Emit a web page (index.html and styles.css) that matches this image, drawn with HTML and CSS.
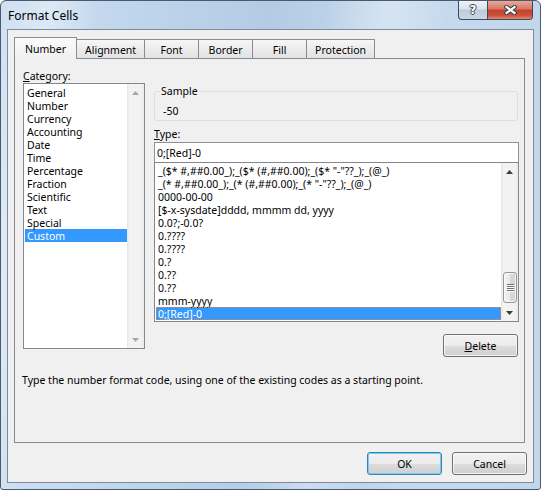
FILE: index.html
```html
<!DOCTYPE html>
<html lang="en">
<head>
<meta charset="utf-8">
<title>Format Cells</title>
<link rel="stylesheet" href="styles.css">
</head>
<body>
<div class="window">
  <div class="titlebar">
    <div class="title">Format Cells</div>
    <div class="caps">
      <div class="cap help"><span class="qmark">?</span></div>
      <div class="cap close">
        <svg width="13" height="10" viewBox="0 0 13 10"><path d="M2.5 2 L10.5 8 M10.5 2 L2.5 8" stroke="#34404c" stroke-width="4.2" stroke-linecap="square" fill="none"/><path d="M2.5 2 L10.5 8 M10.5 2 L2.5 8" stroke="#fff" stroke-width="2.2" stroke-linecap="square" fill="none"/></svg>
      </div>
    </div>
  </div>
  <div class="client">
    <div class="tabs">
      <div class="tab active">Number</div>
      <div class="tab">Alignment</div>
      <div class="tab">Font</div>
      <div class="tab">Border</div>
      <div class="tab">Fill</div>
      <div class="tab">Protection</div>
    </div>
    <div class="panel">
      <div class="panel-grid">
        <div class="col-left">
          <div class="label"><u>C</u>ategory:</div>
          <div class="listbox cat">
            <ul class="items">
              <li>General</li>
              <li>Number</li>
              <li>Currency</li>
              <li>Accounting</li>
              <li>Date</li>
              <li>Time</li>
              <li>Percentage</li>
              <li>Fraction</li>
              <li>Scientific</li>
              <li>Text</li>
              <li>Special</li>
              <li class="sel">Custom</li>
            </ul>
            <div class="vscroll disabled">
              <div class="sb-btn"><svg width="7" height="4" viewBox="0 0 7 4"><path d="M0 4 L3.5 0 L7 4Z" fill="#a7a7a7"/></svg></div>
              <div class="sb-track"></div>
              <div class="sb-btn"><svg width="7" height="4" viewBox="0 0 7 4"><path d="M0 0 L3.5 4 L7 0Z" fill="#a7a7a7"/></svg></div>
            </div>
          </div>
        </div>
        <div class="col-right">
          <fieldset class="sample">
            <legend>Sample</legend>
            <div class="sample-value">-50</div>
          </fieldset>
          <div class="label type-label"><u>T</u>ype:</div>
          <div class="textbox">0;[Red]-0</div>
          <div class="listbox types">
            <ul class="items">
              <li>_($* #,##0.00_);_($* (#,##0.00);_($* "-"??_);_(@_)</li>
              <li>_(* #,##0.00_);_(* (#,##0.00);_(* "-"??_);_(@_)</li>
              <li>0000-00-00</li>
              <li>[$-x-sysdate]dddd, mmmm dd, yyyy</li>
              <li>0.0?;-0.0?</li>
              <li>0.????</li>
              <li>0.????</li>
              <li>0.?</li>
              <li>0.??</li>
              <li>0.??</li>
              <li>mmm-yyyy</li>
              <li class="sel focus">0;[Red]-0</li>
            </ul>
            <div class="vscroll">
              <div class="sb-btn"><svg width="7" height="4" viewBox="0 0 7 4"><path d="M0 4 L3.5 0 L7 4Z" fill="#3c3c3c"/></svg></div>
              <div class="sb-track">
                <div class="thumb">
                  <svg width="7" height="8" viewBox="0 0 7 8"><path d="M0 0.5h7M0 2.5h7M0 4.5h7M0 6.5h7" stroke="#6e6e6e"/><path d="M0 1.5h7M0 3.5h7M0 5.5h7M0 7.5h7" stroke="#fdfdfd"/></svg>
                </div>
              </div>
              <div class="sb-btn"><svg width="7" height="4" viewBox="0 0 7 4"><path d="M0 0 L3.5 4 L7 0Z" fill="#3c3c3c"/></svg></div>
            </div>
          </div>
          <div class="btn-row">
            <button class="btn"><u>D</u>elete</button>
          </div>
        </div>
      </div>
      <p class="hint">Type the number format code, using one of the existing codes as a starting point.</p>
    </div>
    <div class="footer">
      <button class="btn default">OK</button>
      <button class="btn">Cancel</button>
    </div>
  </div>
</div>
</body>
</html>
```
FILE: styles.css
```css
* { box-sizing: border-box; }
html, body { margin: 0; padding: 0; }
body {
  width: 541px;
  height: 490px;
  overflow: hidden;
  background: #ffffff;
  font-family: "Noto Sans", "Open Sans", sans-serif;
  font-size: 10.5px;
  color: #000;
}

.window {
  width: 541px;
  height: 490px;
  border: 1px solid #4b5a6b;
  border-radius: 6px 6px 3px 3px;
  background:
    linear-gradient(100deg, rgba(255,255,255,0) 0%, rgba(255,255,255,0.35) 8%, rgba(255,255,255,0) 16%, rgba(255,255,255,0) 52%, rgba(255,255,255,0.3) 62%, rgba(255,255,255,0) 72%),
    linear-gradient(90deg, #cfe0f2 0%, #bcd3ea 30%, #b3cbe5 50%, #c6daee 75%, #c2d7ec 100%);
  display: flex;
  flex-direction: column;
  overflow: hidden;
}

.titlebar {
  height: 28px;
  flex: none;
  display: flex;
  justify-content: space-between;
  align-items: flex-start;
  padding: 0 7px;
}
.title {
  font-size: 12px;
  line-height: 30px;
  color: #000;
}
.caps { display: flex; }
.cap {
  height: 19px;
  border: 1px solid #3d4a5a;
  border-top: none;
  display: flex;
  align-items: center;
  justify-content: center;
}
.help {
  width: 29px;
  border-right: none;
  border-radius: 0 0 0 4px;
  background: linear-gradient(#eef3f8 0%, #d9e2ec 45%, #bccbdb 50%, #cbd8e5 100%);
}
.qmark {
  font-family: "DejaVu Sans", sans-serif;
  font-weight: bold;
  font-size: 12px;
  line-height: 12px;
  color: #fff;
  text-shadow: 1px 0 0 #3b4754, -1px 0 0 #3b4754, 0 1px 0 #3b4754, 0 -1px 0 #3b4754;
}
.close {
  width: 46px;
  border-radius: 0 0 4px 0;
  background: linear-gradient(#eaa898 0%, #d77663 45%, #c5412e 50%, #cc523d 80%, #e28b74 100%);
}

.client {
  flex: 1;
  margin: 0 6px 6px;
  border: 1px solid #7d8b9a;
  background: #f0f0f0;
  display: flex;
  flex-direction: column;
  padding: 7px 6px 7px 6px;
}

.tabs {
  display: flex;
  align-items: flex-end;
  height: 22px;
  margin-bottom: -1px;
  position: relative;
  z-index: 1;
}
.tab {
  height: 20px;
  min-width: 55px;
  padding: 1px 8px 0;
  margin-left: -1px;
  border: 1px solid #898c95;
  line-height: 18px;
  text-align: center;
  background: linear-gradient(#f6f6f6, #e2e2e2);
  white-space: nowrap;
}
.tab.active {
  height: 22px;
  margin-left: 0;
  padding: 2px 10px 0;
  border-bottom: none;
  line-height: 19px;
  background: linear-gradient(#fbfbfb, #f0f0f0);
  position: relative;
  z-index: 2;
}

.panel {
  flex: 1;
  margin-right: 2px;
  border: 1px solid #898c95;
  background: #f0f0f0;
  padding: 9px 5px 0 8px;
}

.panel-grid {
  display: grid;
  grid-template-columns: 122px 365px;
  column-gap: 9px;
  align-items: start;
}

.label {
  height: 15px;
  padding-top: 1px;
  line-height: 15px;
  white-space: nowrap;
}

.listbox {
  border: 1px solid #828790;
  background: #fff;
  display: flex;
}
.cat { height: 266px; }
.types { height: 160px; margin-top: -1px; }

.items {
  list-style: none;
  margin: 0;
  flex: 1;
  min-width: 0;
  padding: 2px 0 0 1px;
}
.types .items { padding-top: 1px; }
.items li {
  height: 13px;
  padding: 1px 0 0 2px;
  line-height: 12px;
  white-space: nowrap;
}
.items li.sel {
  background: #3399ff;
  color: #fff;
}
.items li.focus {
  outline: 1px dotted #e8833a;
  outline-offset: -1px;
}

.vscroll {
  width: 17px;
  flex: none;
  display: flex;
  flex-direction: column;
  background: linear-gradient(90deg, #e6e6e6 0%, #f3f3f3 15%, #f1f1f1 85%, #e9e9e9 100%);
}
.sb-btn {
  height: 17px;
  flex: none;
  display: flex;
  align-items: center;
  justify-content: center;
}
.sb-track {
  flex: 1;
  display: flex;
  flex-direction: column;
  justify-content: flex-end;
  padding-bottom: 1px;
}
.thumb {
  height: 31px;
  margin: 0 1px 0 2px;
  border: 1px solid #979797;
  border-radius: 3px;
  background: linear-gradient(90deg, #f4f4f4 0%, #e9e9e9 50%, #d9d9d9 51%, #d4d4d4 100%);
  box-shadow: inset 0 0 0 1px rgba(255,255,255,0.7);
  display: flex;
  align-items: center;
  justify-content: center;
}

.sample {
  margin: 16px 0 0;
  padding: 0 5px 2px;
  border: 1px solid #d5dfe5;
  border-radius: 3px;
  width: 364px;
}
.sample legend {
  padding: 0 1px;
  line-height: 14px;
}
.sample-value {
  padding: 6px 0 0 3px;
  line-height: 14px;
}

.type-label { margin-top: 5px; }

.textbox {
  height: 21px;
  margin-top: 1px;
  border: 1px solid #8d9299;
  background: #fff;
  padding: 1px 0 0 2px;
  line-height: 18px;
}

.btn-row {
  display: flex;
  justify-content: flex-end;
  margin-top: 12px;
  padding-right: 1px;
}

.btn {
  width: 75px;
  height: 23px;
  padding: 0;
  font-family: inherit;
  font-size: 10.5px;
  color: #000;
  border: 1px solid #707070;
  border-radius: 3px;
  background: linear-gradient(#f2f2f2 0%, #ebebeb 50%, #dddddd 51%, #cfcfcf 100%);
  box-shadow: inset 0 0 0 1px rgba(255,255,255,0.75);
}
.btn.default {
  border-color: #3c7fb1;
  box-shadow: inset 0 0 0 1px #6fd0f7;
}

.hint {
  margin: 16px 0 0 -1px;
  line-height: 14px;
  white-space: nowrap;
}

.footer {
  flex: none;
  display: flex;
  justify-content: flex-end;
  gap: 10px;
  padding-top: 9px;
}
```
